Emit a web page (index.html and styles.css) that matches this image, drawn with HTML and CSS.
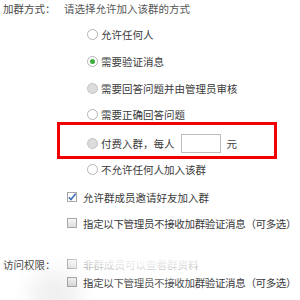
FILE: index.html
```html
<!DOCTYPE html>
<html>
<head>
<meta charset="utf-8">
<link rel="stylesheet" href="styles.css">
</head>
<body>
<div class="page">
  <div class="line header">
    <span class="label">加群方式：</span>
    <span class="hint">请选择允许加入该群的方式</span>
  </div>
  <div class="opts">
    <div class="opt r1"><span class="radio"></span><span>允许任何人</span></div>
    <div class="opt r2"><span class="radio on"></span><span>需要验证消息</span></div>
    <div class="opt r3"><span class="radio dis"></span><span>需要回答问题并由管理员审核</span></div>
    <div class="opt r4"><span class="radio"></span><span>需要正确回答问题</span></div>
    <div class="paybox">
      <div class="opt pay"><span class="radio dis"></span><span>付费入群，每人</span><span class="money"></span><span>元</span></div>
    </div>
    <div class="opt r6"><span class="radio"></span><span>不允许任何人加入该群</span></div>
  </div>
  <div class="checks">
    <div class="chk c1"><span class="box on"><svg width="10" height="10" viewBox="0 0 10 10"><path d="M1.8 5.2 L4 7.6 L8.6 1.8" fill="none" stroke="#3f6fb8" stroke-width="1.6"/></svg></span><span>允许群成员邀请好友加入群</span></div>
    <div class="chk c2 tight"><span class="box"></span><span>指定以下管理员不接收加群验证消息（可多选）</span></div>
  </div>
  <div class="line access">
    <span class="label">访问权限：</span>
    <div class="chk"><span class="box"></span><span>非群成员可以查看群资料</span></div>
  </div>
  <div class="checks">
    <div class="chk c4 tight"><span class="box"></span><span>指定以下管理员不接收加群验证消息（可多选）</span></div>
  </div>
  <div class="smudge"></div>
  <div class="smudge2"></div>
</div>
</body>
</html>
```
FILE: styles.css
```css
html, body {
  margin: 0;
  padding: 0;
  background: #fff;
}
.page {
  position: relative;
  width: 300px;
  height: 300px;
  overflow: hidden;
  font-family: "Noto Sans CJK SC", "Noto Sans", sans-serif;
  font-size: 10.5px;
  color: #3a3a3a;
}
.line {
  display: flex;
  align-items: center;
  height: 16px;
}
.label {
  padding-left: 3px;
  color: #4a4a4a;
  flex: none;
  box-sizing: border-box;
  width: 64px;
}
.hint {
  color: #555;
}
.opts {
  padding-left: 87px;
  display: flex;
  flex-direction: column;
}
.opt {
  display: flex;
  align-items: center;
  height: 16px;
  gap: 3px;
  white-space: nowrap;
}
.r1 { margin-top: 10px; }
.r2 { margin-top: 11px; }
.r3 { margin-top: 11px; }
.r4 { margin-top: 10px; }
.r6 { margin-top: 2px; }
.radio {
  width: 11px;
  height: 11px;
  box-sizing: border-box;
  border: 1px solid #b4b4b4;
  border-radius: 50%;
  background: #fff;
  display: flex;
  align-items: center;
  justify-content: center;
  flex: none;
}
.radio.on::after {
  content: "";
  width: 5px;
  height: 5px;
  border-radius: 50%;
  background: #3cae3c;
}
.radio.dis {
  background: #dcdcdc;
  border-color: #c2c2c2;
}
.paybox {
  margin-left: -30px;
  width: 220px;
  height: 37px;
  box-sizing: border-box;
  border: 3px solid #f00000;
  padding: 9px 0 3px 27px;
}
.pay {
  height: 19px;
}
.money {
  width: 40px;
  height: 19px;
  box-sizing: border-box;
  border: 1px solid #bdbdbd;
  background: #fff;
  margin: 0 3px 0 3px;
  flex: none;
}
.checks {
  padding-left: 67px;
}
.chk {
  display: flex;
  align-items: center;
  gap: 6px;
  height: 16px;
  white-space: nowrap;
}
.tight {
  letter-spacing: -0.35px;
}
.c1 { margin-top: 12px; }
.c2 { margin-top: 10px; }
.access { margin-top: 25px; }
.access .label { width: 67px; }
.c4 { margin-top: 2px; }
.box {
  width: 10px;
  height: 10px;
  box-sizing: border-box;
  border: 1px solid #a8a8a8;
  background: linear-gradient(#f6f6f6, #dedede);
  flex: none;
  position: relative;
}
.box.on {
  background: #fff;
}
.box svg {
  position: absolute;
  left: -1px;
  top: -1px;
}
.smudge {
  position: absolute;
  left: 70px;
  top: 246px;
  width: 150px;
  height: 30px;
  border-radius: 50%;
  background: rgba(255, 255, 255, 0.92);
  filter: blur(7px);
}
.smudge2 {
  position: absolute;
  left: 30px;
  top: 270px;
  width: 50px;
  height: 50px;
  border-radius: 50%;
  background: rgba(0, 0, 0, 0.06);
  filter: blur(10px);
}
```
